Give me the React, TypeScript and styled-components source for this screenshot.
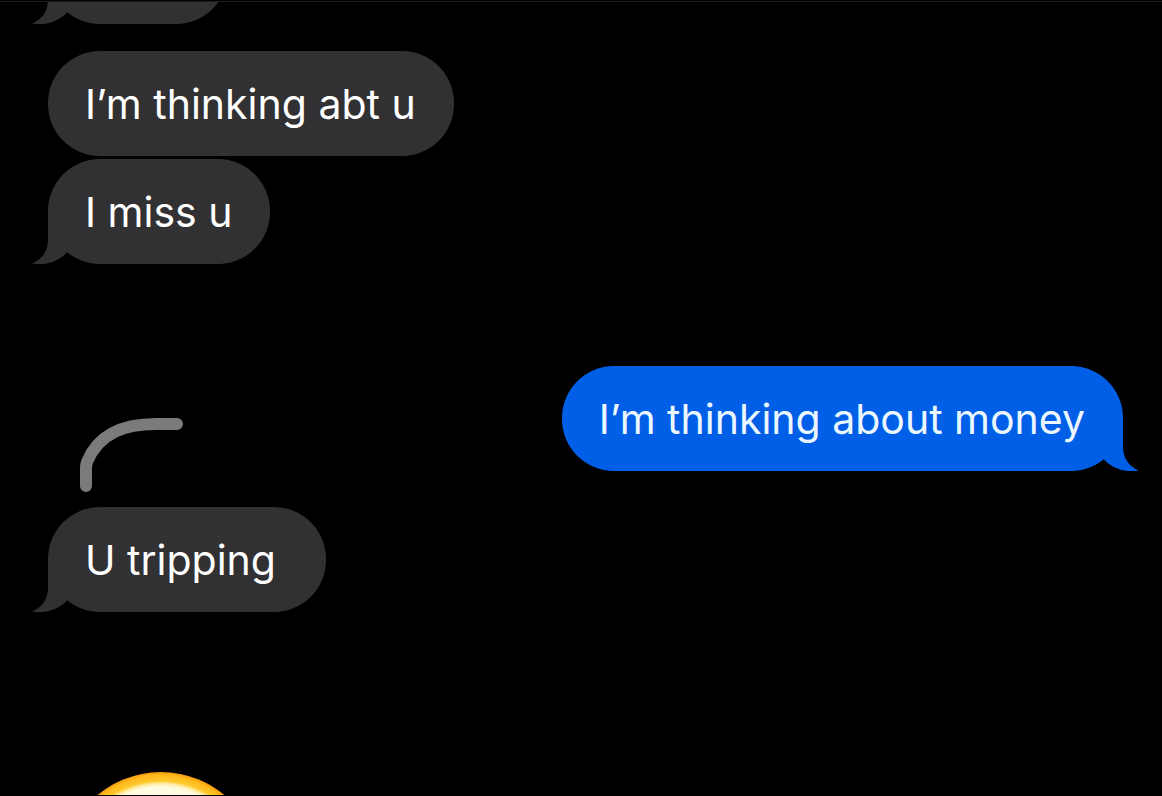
import React from "react";
import styled, { createGlobalStyle } from "styled-components";

const GlobalStyle = createGlobalStyle`
  *, *::before, *::after { box-sizing: border-box; }
  body {
    margin: 0;
    background: #000;
    font-family: Inter, "Liberation Sans", sans-serif;
  }
`;

type Side = "in" | "out";

const Thread = styled.main`
  display: flex;
  flex-direction: column;
  height: 100vh;
  overflow: hidden;
  padding: 0 39px 0 48px;
  background: #000;
  position: relative;
`;

const Edge = styled.div<{ $at: "top" | "bottom" }>`
  position: absolute;
  left: 0;
  right: 0;
  ${(p) => (p.$at === "top" ? "top: 0; height: 2px; border-bottom: 1px solid #1c1c1e;" : "bottom: 0; height: 1px;")}
  background: #000;
`;

const CutOff = styled.div`
  display: flex;
  flex-direction: column;
  justify-content: flex-end;
  flex: none;
  height: 24px;
  margin-bottom: 27px;
`;

const Group = styled.section<{ $side: Side; $gap: number }>`
  display: flex;
  flex: none;
  flex-direction: column;
  align-items: ${(p) => (p.$side === "in" ? "flex-start" : "flex-end")};
  gap: 3px;
  margin-bottom: ${(p) => p.$gap}px;
`;

const Bubble = styled.p<{ $side: Side }>`
  position: relative;
  flex: none;
  margin: 0;
  min-width: 180px;
  min-height: 105px;
  padding: 27px 38px 26px 37px;
  border-radius: 52px;
  background: ${(p) => (p.$side === "in" ? "#313133" : "#005fe6")};
  color: ${(p) => (p.$side === "in" ? "#fff" : "#eaf7ff")};
  font-size: 41px;
  line-height: 52px;
  align-self: ${(p) => (p.$side === "in" ? "flex-start" : "flex-end")};
`;

const TailShape = styled.svg<{ $side: Side }>`
  position: absolute;
  bottom: 0;
  ${(p) => (p.$side === "in" ? "left: -16px;" : "right: -16px; transform: scaleX(-1);")}
  fill: ${(p) => (p.$side === "in" ? "#313133" : "#005fe6")};
`;

const ReplyLine = styled.svg`
  display: block;
  flex: none;
  margin: -53px 0 15px 32px;
  fill: none;
  stroke: #7b7b7b;
  stroke-width: 12;
  stroke-linecap: round;
`;

const Emoji = styled.svg`
  display: block;
  flex: none;
  margin-left: 14px;
`;

const Tail = ({ side }: { side: Side }) => (
  <TailShape $side={side} width="40" height="52" viewBox="0 0 40 52" aria-hidden="true">
    <path d="M16 0V28C16 40 9 48 0 51.500C3 52 6 52 11 52C21 51 29 47 35.500 40L30 0Z" />
  </TailShape>
);

export default function App() {
  return (
    <>
      <GlobalStyle />
      <Thread>
        <CutOff>
          <Bubble $side="in">
            <Tail side="in" />
          </Bubble>
        </CutOff>
        <Group $side="in" $gap={102}>
          <Bubble $side="in">I’m thinking abt u</Bubble>
          <Bubble $side="in">
            I miss u
            <Tail side="in" />
          </Bubble>
        </Group>
        <Group $side="out" $gap={0}>
          <Bubble $side="out">
            I’m thinking about money
            <Tail side="out" />
          </Bubble>
        </Group>
        <ReplyLine width="104" height="74" viewBox="0 0 104 74" aria-hidden="true">
          <path d="M97 6H76C46 6 19 14 7 44Q6 47 6 50V68" />
        </ReplyLine>
        <Group $side="in" $gap={160}>
          <Bubble $side="in">
            U tripping&nbsp;
            <Tail side="in" />
          </Bubble>
        </Group>
        <Emoji width="198" height="198" viewBox="0 0 198 198" aria-hidden="true">
          <defs>
            <radialGradient id="face" gradientUnits="userSpaceOnUse" cx="99" cy="99" r="99">
              <stop offset="0.850" stopColor="#fffbe0" />
              <stop offset="0.885" stopColor="#ffea9a" />
              <stop offset="0.910" stopColor="#ffc92e" />
              <stop offset="0.970" stopColor="#ffb81a" />
              <stop offset="1" stopColor="#f59a10" />
            </radialGradient>
          </defs>
          <circle cx="99" cy="99" r="99" fill="url(#face)" />
        </Emoji>
        <Edge $at="top" />
        <Edge $at="bottom" />
      </Thread>
    </>
  );
}
